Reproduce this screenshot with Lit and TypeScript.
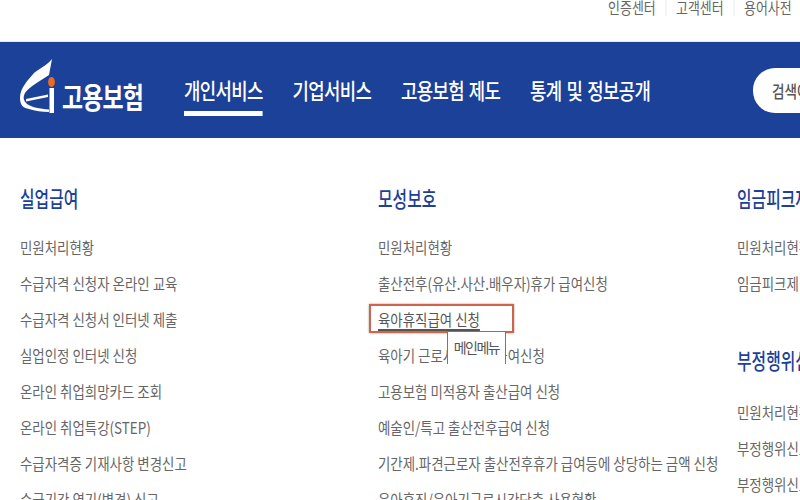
import { LitElement, html, css } from "lit";
import { customElement } from "lit/decorators.js";

type Col = { title: string; items: string[]; link?: number };

const col1: Col = {
  title: "실업급여",
  items: [
    "민원처리현황",
    "수급자격 신청자 온라인 교육",
    "수급자격 신청서 인터넷 제출",
    "실업인정 인터넷 신청",
    "온라인 취업희망카드 조회",
    "온라인 취업특강(STEP)",
    "수급자격증 기재사항 변경신고",
    "수급기간 연기(변경) 신고",
  ],
};

const col2: Col = {
  title: "모성보호",
  link: 2,
  items: [
    "민원처리현황",
    "출산전후(유산.사산.배우자)휴가 급여신청",
    "육아휴직급여 신청",
    "육아기 근로시간단축 급여신청",
    "고용보험 미적용자 출산급여 신청",
    "예술인/특고 출산전후급여 신청",
    "기간제.파견근로자 출산전후휴가 급여등에 상당하는 금액 신청",
    "육아휴직/육아기근로시간단축 사용현황",
  ],
};

const logo = html`
  <svg class="logo" width="36" height="56" viewBox="0 0 36 56">
    <path d="M32 1 C26 8 20 10 14 15 C8 22 0 30 0 40 C0 48 4 50 9 51 C15 53 22 54 29 54 L29 51.500 C20 51 11 49 7 46 C3 42 3 39 5 35 C9 29 20 23 29 17 Z" fill="#fff"/>
    <path d="M6 41 L28 36.500 L28 39 L6 43.500 Z" fill="#fff"/>
    <rect x="29.500" y="30" width="4.500" height="25" fill="#fff"/>
    <ellipse cx="31.500" cy="24" rx="3.400" ry="5" fill="#ec6a22"/>
  </svg>
`;

@customElement("app-root")
export class AppRoot extends LitElement {
  static styles = css`
    :host {
      display: block;
      width: 800px;
      height: 500px;
      overflow: hidden;
      background: #fff;
      font-family: "Noto Sans CJK KR", "Noto Sans", sans-serif;
    }
    /* the reference text is squeezed sideways, hence the scaleX on each text run */
    .sq {
      display: inline-block;
      white-space: nowrap;
      transform-origin: left center;
    }
    .util {
      height: 42px;
      display: flex;
      justify-content: flex-end;
      align-items: flex-start;
      padding-right: 8px;
      box-sizing: border-box;
      border-bottom: 1px solid #e6e8ec;
      overflow: hidden;
    }
    .util-in {
      display: flex;
      flex: none;
      transform: scaleX(0.81);
      transform-origin: right top;
    }
    .util span {
      font-size: 16px;
      color: #666;
      line-height: 14px;
      height: 16px;
      padding: 0 12px;
      border-left: 1px solid #e4e4e4;
      white-space: nowrap;
    }
    .util span:first-child {
      border-left: 0;
      padding-left: 0;
    }
    .util span:last-child {
      padding-right: 0;
    }
    .bar {
      height: 96px;
      background: #1c4198;
      display: flex;
      align-items: center;
      padding-left: 20px;
      overflow: hidden;
    }
    .brand {
      display: flex;
      align-items: center;
      width: 164px;
      flex: none;
      height: 56px;
    }
    .logo {
      flex: none;
      margin-top: -8px;
    }
    .brand .name {
      color: #fff;
      font-size: 29px;
      font-weight: 700;
      letter-spacing: -1px;
      margin-left: 6px;
      margin-top: 11px;
      transform: scaleX(0.79);
    }
    .nav {
      display: flex;
      gap: 36.7px;
      flex: none;
      transform: scaleX(0.81);
      transform-origin: left center;
      width: 470px;
    }
    .nav a {
      color: #fff;
      font-size: 22px;
      font-weight: 500;
      letter-spacing: -0.8px;
      word-spacing: 2px;
      padding: 3px 0 6px;
      line-height: 32px;
      white-space: nowrap;
      border-bottom: 5px solid transparent;
      margin-top: 5px;
    }
    .nav a.on {
      border-bottom-color: #fff;
    }
    .search {
      margin-left: auto;
      flex: none;
      width: 47px;
      height: 45px;
      background: #fff;
      border-radius: 22px 0 0 22px;
      color: #555;
      font-size: 17px;
      font-weight: 500;
      line-height: 45px;
      padding-left: 19px;
      box-sizing: border-box;
      overflow: hidden;
    }
    .search .sq {
      transform: scaleX(0.8);
    }
    .body {
      display: flex;
      padding: 41px 0 0 20px;
    }
    .col {
      width: 359px;
      flex: none;
    }
    .col:first-child {
      width: 358px;
    }
    h3 {
      margin: 0 0 14px;
      font-size: 22px;
      font-weight: 500;
      color: #1c4198;
      line-height: 36px;
    }
    h3 .sq {
      transform: scaleX(0.72);
    }
    ul {
      list-style: none;
      margin: 0;
      padding: 0;
    }
    li {
      height: 36px;
      line-height: 36px;
      font-size: 16px;
      color: #666;
      white-space: nowrap;
    }
    li .sq {
      transform: scaleX(0.84);
    }
    li.current {
      position: relative;
      z-index: 1;
      color: #555;
    }
    li.current .sq {
      text-decoration: underline;
      text-decoration-thickness: 2px;
      text-underline-offset: 3px;
    }
    li.current::before {
      content: "";
      position: absolute;
      left: -9px;
      top: 3px;
      width: 141px;
      height: 25px;
      border: 2px solid #d0644a;
      box-shadow: 0 0 2px #999;
    }
    .tip {
      position: absolute;
      left: 69px;
      top: 30px;
      width: 59px;
      height: 33px;
      background: #fff;
      border: 1px solid #777;
      border-bottom: 0;
      box-sizing: border-box;
      font-size: 14px;
      line-height: 30px;
      text-align: center;
      color: #555;
      letter-spacing: -1.5px;
    }
    .third {
      width: 80px;
    }
    .third h3.second {
      margin-top: 40px;
      margin-bottom: 17px;
    }
  `;

  private item(text: string) {
    return html`<span class="sq">${text}</span>`;
  }

  private renderCol(c: Col) {
    return html`
      <div class="col">
        <h3>${this.item(c.title)}</h3>
        <ul>
          ${c.items.map((t, i) =>
            i === c.link
              ? html`<li class="current">${this.item(t)}<div class="tip">메인메뉴</div></li>`
              : html`<li>${this.item(t)}</li>`
          )}
        </ul>
      </div>
    `;
  }

  render() {
    return html`
      <div class="util">
        <div class="util-in">
          <span>인증센터</span><span>고객센터</span><span>용어사전</span>
        </div>
      </div>
      <div class="bar">
        <div class="brand">${logo}<span class="name sq">고용보험</span></div>
        <nav class="nav">
          <a class="on">개인서비스</a>
          <a>기업서비스</a>
          <a>고용보험 제도</a>
          <a>통계 및 정보공개</a>
        </nav>
        <div class="search"><span class="sq">검색어</span></div>
      </div>
      <div class="body">
        ${this.renderCol(col1)} ${this.renderCol(col2)}
        <div class="col third">
          <h3>${this.item("임금피크제")}</h3>
          <ul>
            <li>${this.item("민원처리현황")}</li>
            <li>${this.item("임금피크제 신청")}</li>
          </ul>
          <h3 class="second">${this.item("부정행위신고")}</h3>
          <ul>
            <li>${this.item("민원처리현황")}</li>
            <li>${this.item("부정행위신고")}</li>
            <li>${this.item("부정행위신고")}</li>
          </ul>
        </div>
      </div>
    `;
  }
}
